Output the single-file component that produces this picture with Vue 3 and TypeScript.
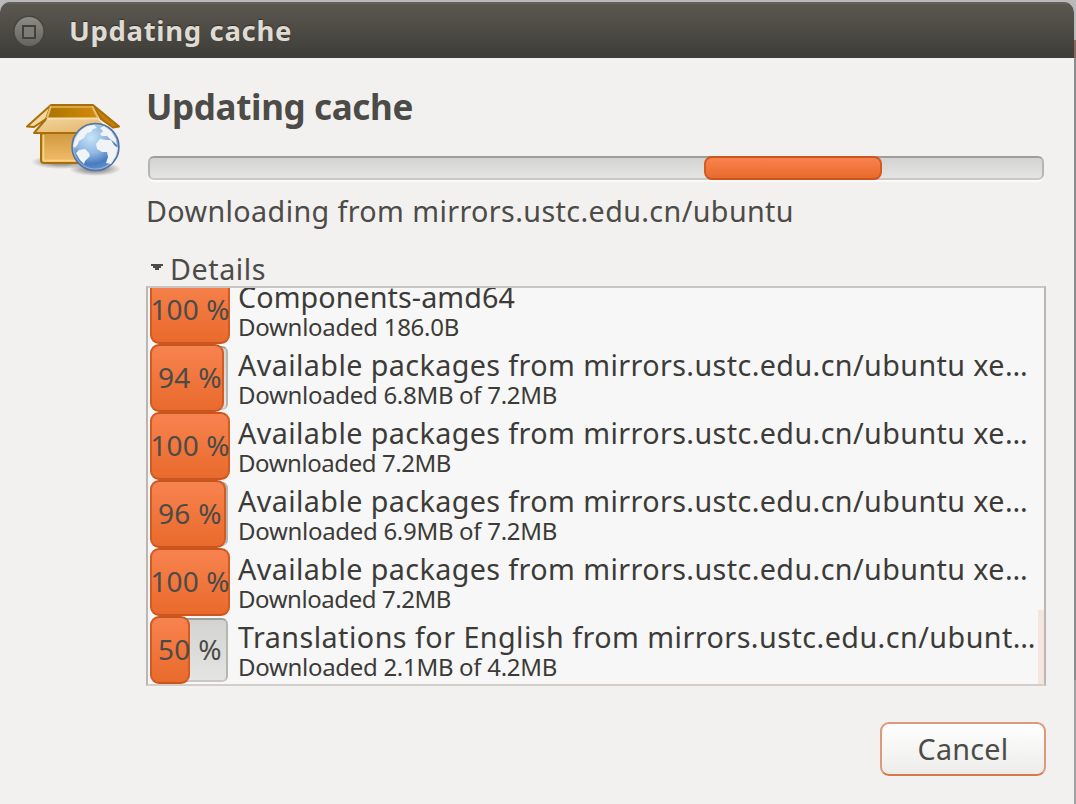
<script setup lang="ts">
import type { ObjectDirective } from 'vue'

interface Item {
  percent: number
  fill: number
  title: string
  titleWidth: number
  status: string
  statusWidth: number
}

const packages = 'Available packages from mirrors.ustc.edu.cn/ubuntu xe…'

const items: Item[] = [
  { percent: 100, fill: 80, title: 'Components-amd64', titleWidth: 277, status: 'Downloaded 186.0B', statusWidth: 221 },
  { percent: 94, fill: 74, title: packages, titleWidth: 790, status: 'Downloaded 6.8MB of 7.2MB', statusWidth: 319 },
  { percent: 100, fill: 80, title: packages, titleWidth: 790, status: 'Downloaded 7.2MB', statusWidth: 213 },
  { percent: 96, fill: 76, title: packages, titleWidth: 790, status: 'Downloaded 6.9MB of 7.2MB', statusWidth: 319 },
  { percent: 100, fill: 80, title: packages, titleWidth: 790, status: 'Downloaded 7.2MB', statusWidth: 213 },
  { percent: 50, fill: 40, title: 'Translations for English from mirrors.ustc.edu.cn/ubunt…', titleWidth: 798, status: 'Downloaded 2.1MB of 4.2MB', statusWidth: 319 },
]

// Adjusts tracking so that a label takes up the given width.
const vFit: ObjectDirective<HTMLElement, number> = {
  mounted(el, { value }) {
    const count = (el.textContent ?? '').length
    const natural = el.getBoundingClientRect().width
    el.style.letterSpacing = `${((value - natural) / count).toFixed(3)}px`
  },
}
</script>

<template>
  <div class="desktop">
    <section class="window">
      <header class="titlebar">
        <svg class="winbtn" width="34" height="34" viewBox="0 0 34 34">
          <defs>
            <linearGradient id="wb" x1="0" y1="0" x2="0" y2="1">
              <stop offset="0" stop-color="#8d8c86" />
              <stop offset="1" stop-color="#64635d" />
            </linearGradient>
          </defs>
          <circle cx="17" cy="16.500" r="15.200" fill="url(#wb)" stroke="#45443f" stroke-width="1.600" />
          <rect x="11" y="11" width="12" height="12" fill="#7d7c76" stroke="#42413c" stroke-width="2" />
        </svg>
        <span v-fit="223" class="caption">Updating cache</span>
      </header>

      <main class="content">
        <svg class="icon" width="130" height="105" viewBox="0 0 130 105">
          <defs>
            <linearGradient id="front" x1="0" y1="0" x2="0" y2="1">
              <stop offset="0" stop-color="#cf983c" />
              <stop offset="1" stop-color="#f3bd6a" />
            </linearGradient>
            <linearGradient id="flap" x1="0" y1="0" x2="1" y2="1">
              <stop offset="0" stop-color="#f2d29a" />
              <stop offset="1" stop-color="#e3b566" />
            </linearGradient>
            <linearGradient id="inside" x1="0" y1="0" x2="1" y2="0">
              <stop offset="0" stop-color="#a87400" />
              <stop offset="1" stop-color="#d38a0b" />
            </linearGradient>
            <radialGradient id="sea" cx="0.4" cy="0.3" r="0.75">
              <stop offset="0" stop-color="#c8e4f8" />
              <stop offset="0.45" stop-color="#8fb8e2" />
              <stop offset="0.75" stop-color="#4a7bbf" />
              <stop offset="1" stop-color="#6f9bd6" />
            </radialGradient>
            <radialGradient id="shade">
              <stop offset="0.4" stop-color="#555" stop-opacity="0.55" />
              <stop offset="1" stop-color="#555" stop-opacity="0" />
            </radialGradient>
          </defs>
          <ellipse cx="51" cy="77" rx="30" ry="7" fill="url(#shade)" />
          <ellipse cx="85" cy="84" rx="26" ry="7" fill="url(#shade)" />
          <path d="M41 20H83L88 34H34Z" fill="url(#inside)" />
          <path d="M41 20L17 41.500L24 42L36 34Z" fill="#f3d9a2" stroke="#a86f08" stroke-width="2" stroke-linejoin="round" />
          <path d="M83 20L109 41.500L103 42.500L91 34Z" fill="#c77d08" stroke="#a86f08" stroke-width="2" stroke-linejoin="round" />
          <path d="M31 48V75Q31 78 34 78H76L92 69V47Z" fill="url(#front)" stroke="#a86f08" stroke-width="2" stroke-linejoin="round" />
          <path d="M33.500 50V75.500H74" fill="none" stroke="#f7d48e" stroke-width="1.500" />
          <path d="M36 34H88L101 48H24Z" fill="url(#flap)" />
          <path d="M36 34L24 48H92" fill="none" stroke="#a86f08" stroke-width="2" stroke-linejoin="round" />
          <path d="M37 33.500H88" stroke="#f8deb0" stroke-width="2" />
          <path d="M41 21L37 33M82 21L88 33" stroke="#e8bd6d" stroke-width="2" />
          <path d="M41 22H82" stroke="#dba64b" stroke-width="2" />
          <path d="M41 20H83" stroke="#a86f08" stroke-width="2" />
          <circle cx="85.500" cy="62" r="23.500" fill="url(#sea)" stroke="#5572a0" stroke-width="1.500" />
          <g fill="#f1f4f7">
            <path d="M65 54L70 46L77 41L84 40L87 43L83 44L81 47L77 48L74 53L69 56L68 59L65 63L63 61Z" />
            <path d="M90 43L94 41L101 46L106 54L107 60L104 57L100 54L97 51L92 51L90 49L93 46Z" />
            <path d="M96 55L90 54L86 59L87 64L92 67L97 67L98 72L96 78L101 79L106 71L108 63L104 60L101 55Z" />
            <path d="M69 65L75 64L79 68L80 71L75 76L74 79L70 75L66 68Z" />
          </g>
          <circle cx="85.500" cy="62" r="22" fill="none" stroke="#dbe8f5" stroke-opacity="0.4" stroke-width="1.200" />
        </svg>

        <h1 class="heading"><span v-fit="267">Updating cache</span></h1>
        <div class="progress"><div class="pulse"></div></div>
        <p class="message"><span v-fit="648">Downloading from mirrors.ustc.edu.cn/ubuntu</span></p>

        <div class="expander">
          <svg width="12" height="8" viewBox="0 0 12 8"><path d="M0 0H12V2H10V4H8V6H4V4H2V2H0Z" fill="#4c4b47" /></svg>
          <span v-fit="96">Details</span>
        </div>

        <div class="list">
          <div class="rows">
            <div v-for="(item, i) in items" :key="i" class="row">
              <div class="meter">
                <div class="trough"></div>
                <div class="fill" :style="{ width: item.fill + 'px' }"></div>
                <span v-fit="item.percent === 100 ? 79 : 64" class="percent">{{ item.percent }} %</span>
              </div>
              <div class="text">
                <div class="title"><span v-fit="item.titleWidth">{{ item.title }}</span></div>
                <div class="status"><span v-fit="item.statusWidth">{{ item.status }}</span></div>
              </div>
            </div>
          </div>
          <div class="scroller"></div>
        </div>

        <footer class="actions">
          <button class="cancel"><span v-fit="91">Cancel</span></button>
        </footer>
      </main>
    </section>
  </div>
</template>

<style>
body {
  margin: 0;
  overflow: hidden;
}
</style>

<style scoped>
.desktop {
  box-sizing: border-box;
  width: 1076px;
  height: 804px;
  padding: 2px 2px 0 0;
  background: linear-gradient(#b9b9b9 0, #b9b9b9 40px, #86695c 40px, #86695c 58px, #8d8d8d 58px, #8d8d8d 680px, #a0a0a0 680px);
  font-family: "Noto Sans", "Open Sans", sans-serif;
  font-size: 28.7px;
  color: #4c4b47;
}
.window {
  height: 802px;
  background: #f2f1ef;
  border-radius: 10px 10px 0 0;
  overflow: hidden;
}
.titlebar {
  box-sizing: border-box;
  height: 56px;
  padding-left: 12px;
  display: flex;
  align-items: center;
  background: linear-gradient(#5a5850 0, #55534b 12px, #3d3c38 100%);
  box-shadow: inset 0 2px #656359;
}
.winbtn {
  flex: none;
  margin-top: 3px;
}
.caption {
  margin-left: 23px;
  padding-top: 2px;
  font-size: 27.5px;
  line-height: 56px;
  font-weight: 700;
  color: #dfdbd2;
  text-shadow: 0 -1px 1px #302f2b;
  white-space: nowrap;
}
.content {
  display: grid;
  grid-template-columns: 136px 900px;
  column-gap: 10px;
}
.content > * {
  grid-column: 2;
}
.content > .icon {
  grid-column: 1;
  grid-row: 1 / span 3;
  margin: 27px 0 0 10px;
}
.heading {
  margin: 22px 0 0;
  height: 54px;
  line-height: 54px;
  font-size: 35px;
  font-weight: 700;
  white-space: nowrap;
  grid-row: 1;
}
.progress {
  grid-row: 2;
  box-sizing: border-box;
  width: 896px;
  height: 24px;
  margin: 22px 0 0 2px;
  border: 2px solid #b5b5b2;
  border-top-color: #9e9e9b;
  border-bottom-color: #c8c8c6;
  border-radius: 6px;
  background: linear-gradient(#d3d3d1, #e4e4e3);
  box-shadow: 0 2px #fafaf9;
}
.pulse {
  box-sizing: border-box;
  width: 178px;
  height: 24px;
  margin: -2px 0 0 554px;
  border: 2px solid #d35a20;
  border-top-color: #c85820;
  border-bottom-color: #c9561e;
  border-radius: 8px;
  background: linear-gradient(#f8834f, #e96a2c);
}
.message {
  grid-row: 3;
  height: 40px;
  margin: 11px 0 0;
  line-height: 40px;
  white-space: nowrap;
}
.expander {
  height: 38px;
  margin-top: 19px;
  padding-left: 5px;
  display: flex;
  align-items: center;
  gap: 7px;
  line-height: 38px;
}
.expander svg {
  margin-top: -3px;
}
.list {
  position: relative;
  box-sizing: border-box;
  width: 900px;
  height: 400px;
  margin-top: -2px;
  border: 2px solid #b8b7b4;
  border-top-color: #c8c7c4;
  border-bottom-color: #d2cfcb;
  background: #f7f7f7;
  overflow: hidden;
  color: #3c3b37;
}
.rows {
  margin: -12px 0 0 2px;
}
.row {
  display: flex;
  height: 68px;
  white-space: nowrap;
}
.meter {
  position: relative;
  width: 80px;
  flex: none;
  text-align: center;
  line-height: 66px;
}
.trough {
  position: absolute;
  box-sizing: border-box;
  inset: 2px 2px 2px 2px;
  border: 2px solid #b5b5b2;
  border-top-color: #9e9e9b;
  border-bottom-color: #c8c8c6;
  border-radius: 6px;
  background: linear-gradient(#d3d3d1, #e4e4e3);
}
.fill {
  position: absolute;
  box-sizing: border-box;
  left: 0;
  top: 0;
  height: 68px;
  border: 2px solid #d35a20;
  border-top-color: #c9561e;
  border-bottom-color: #c9561e;
  border-radius: 9px;
  background: linear-gradient(#f8834f, #e96a2c);
}
.percent {
  position: relative;
  font-size: 28px;
  color: #4c4b47;
}
.text {
  padding-left: 8px;
}
.title {
  height: 38px;
  line-height: 38px;
  margin-top: 2px;
}
.status {
  height: 26px;
  line-height: 26px;
  font-size: 24px;
  margin-top: -2px;
}
.scroller {
  position: absolute;
  right: 0;
  bottom: 0;
  width: 6px;
  height: 74px;
  background: #f4e5de;
}
.actions {
  display: flex;
  justify-content: flex-end;
  margin-top: 36px;
}
.cancel {
  box-sizing: border-box;
  width: 166px;
  height: 54px;
  padding: 0;
  border: 2px solid #dc997f;
  border-bottom-color: #d77849;
  border-radius: 9px;
  background: linear-gradient(#ffffff, #ececea);
  color: #4c4b47;
  font: 28.7px/50px "Noto Sans", "Open Sans", sans-serif;
}
</style>
